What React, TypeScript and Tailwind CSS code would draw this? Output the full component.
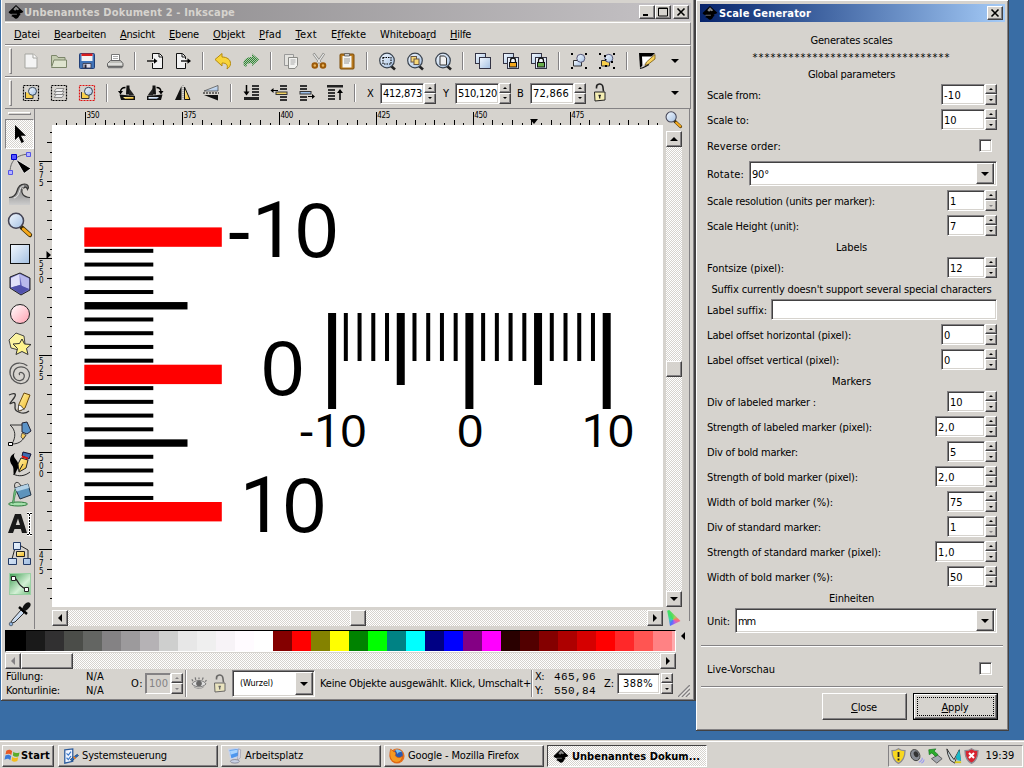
import React, { useLayoutEffect, useRef } from 'react';
import type { ReactNode } from 'react';

const RAISED =
  'border border-t-white border-l-white border-r-[#424142] border-b-[#424142] bg-[#d6d3ce] shadow-[inset_-1px_-1px_0_#848284]';
const SUNKEN =
  'border border-t-[#848284] border-l-[#848284] border-r-white border-b-white bg-white shadow-[inset_1px_1px_0_#424142,inset_-1px_-1px_0_#d6d3ce]';
const DITHER =
  'bg-[conic-gradient(#fff_25%,#d6d3ce_0_50%,#fff_0_75%,#d6d3ce_0)] bg-[length:2px_2px]';

/* A single line of text, tracked so that it takes exactly w pixels. */
function Fit({ w, className = '', children }: { w: number; className?: string; children: ReactNode }) {
  const ref = useRef<HTMLSpanElement>(null);
  useLayoutEffect(() => {
    const el = ref.current;
    if (!el) return;
    el.style.letterSpacing = '0px';
    const n = (el.textContent || '').length;
    el.style.letterSpacing = `${(w - el.getBoundingClientRect().width) / n}px`;
  }, [w]);
  return (
    <span ref={ref} className={`inline-block shrink-0 whitespace-pre ${className}`}>
      {children}
    </span>
  );
}

const U = ({ children }: { children: ReactNode }) => (
  <span className="underline decoration-1 underline-offset-1 [text-decoration-skip-ink:none]">{children}</span>
);

function Tri({ dir, size = 3, color = '#000' }: { dir: 'up' | 'down' | 'left' | 'right'; size?: number; color?: string }) {
  const s = size;
  const d = {
    up: `M0 ${s}L${s} 0L${2 * s} ${s}z`,
    down: `M0 0H${2 * s}L${s} ${s}z`,
    left: `M${s} 0V${2 * s}L0 ${s}z`,
    right: `M0 0L${s} ${s}L0 ${2 * s}z`,
  }[dir];
  const flat = dir === 'up' || dir === 'down';
  return (
    <svg className="shrink-0" width={flat ? 2 * s : s} height={flat ? s : 2 * s}>
      <path d={d} fill={color} />
    </svg>
  );
}

function Spin({ downOff, off }: { downOff?: boolean; off?: boolean }) {
  return (
    <div className="flex h-[21px] w-3 shrink-0 flex-col">
      <div className={`flex h-[10px] items-center justify-center ${RAISED}`}>
        <Tri dir="up" size={2} color={off ? '#848284' : '#000'} />
      </div>
      <div className={`flex h-[11px] items-center justify-center ${RAISED}`}>
        <Tri dir="down" size={2} color={downOff || off ? '#848284' : '#000'} />
      </div>
    </div>
  );
}

/* ---------- icons ---------- */

function Svg({ s = 18, children }: { s?: number; children: ReactNode }) {
  return (
    <svg width={s} height={s} viewBox="0 0 18 18" fill="none" className="shrink-0 overflow-visible">
      {children}
    </svg>
  );
}

function Defs() {
  return (
    <svg width="0" height="0" className="absolute">
      <defs>
        <linearGradient id="blue" x1="0" y1="0" x2="1" y2="1">
          <stop offset="0" stopColor="#f4f9ff" />
          <stop offset="1" stopColor="#a4c0e2" />
        </linearGradient>
        <linearGradient id="pink" x1="0" y1="0" x2="1" y2="1">
          <stop offset="0" stopColor="#fff" />
          <stop offset="1" stopColor="#ffa0b0" />
        </linearGradient>
        <linearGradient id="gold" x1="0" y1="0" x2="1" y2="1">
          <stop offset="0" stopColor="#fff6b0" />
          <stop offset="1" stopColor="#f2b51c" />
        </linearGradient>
        <linearGradient id="grey" x1="0" y1="0" x2="0" y2="1">
          <stop offset="0" stopColor="#777" />
          <stop offset="1" stopColor="#ccc" />
        </linearGradient>
        <linearGradient id="green" x1="0" y1="0" x2="1" y2="1">
          <stop offset="0" stopColor="#3c9b50" />
          <stop offset="0.6" stopColor="#d4f0d6" />
          <stop offset="1" stopColor="#6fbf7c" />
        </linearGradient>
        <pattern id="hatch" width="2" height="2" patternUnits="userSpaceOnUse">
          <rect width="1" height="1" fill="#2f8a35" />
          <rect x="1" y="1" width="1" height="1" fill="#2f8a35" />
        </pattern>
      </defs>
    </svg>
  );
}

const InkLogo = () => (
  <Svg s={16}>
    <path d="M9 1L17 8.5C17.5 10 14 10 13 11C15 12 13.5 13 12.5 13.2C12.5 15 10 17 8.5 16.5C6.5 15.5 6 14.5 4.5 14.2C3 13.5 5.5 12.5 4.8 11.8C3 11 .5 10.5 .7 9z" fill="#000" />
    <path d="M9 2.5L12.5 6L11 7L9.5 6.2L8 7.5L6 6z" fill="#888" />
    <path d="M4 11.5h6" stroke="#777" />
  </Svg>
);

const Lens = ({ children }: { children?: ReactNode }) => (
  <Svg>
    <path d="M13 14l4 3.5" stroke="#222" strokeWidth="2.6" />
    <circle cx="9" cy="8.5" r="7.3" fill="url(#blue)" stroke="#39424e" strokeWidth="1.2" />
    {children}
  </Svg>
);

const LensOrange = ({ s = 18 }: { s?: number }) => (
  <Svg s={s}>
    <path d="M10.5 11L16.5 16.5" stroke="#3a2a00" strokeWidth="3.2" strokeLinecap="round" />
    <path d="M11.800 12.300L16.3 16.3" stroke="#f5a81c" strokeWidth="2.2" strokeLinecap="round" />
    <circle cx="6.5" cy="6.3" r="5.4" fill="url(#blue)" stroke="#445" strokeWidth="1.1" />
  </Svg>
);

const Clone = ({ children }: { children?: ReactNode }) => (
  <Svg>
    <rect x="1.5" y="1.5" width="10" height="10" fill="url(#blue)" stroke="#334" />
    <rect x="5.5" y="5.5" width="11" height="11" fill="url(#blue)" stroke="#334" />
    {children}
  </Svg>
);

const Padlock = ({ color }: { color: string }) => (
  <>
    <rect x="6.5" y="6.5" width="9" height="9" fill="#f4f8ff" />
    <path d="M8.5 10V8.5a2.5 2.5 0 015 0V10" stroke="#111" strokeWidth="1.3" />
    <rect x="7.5" y="10.5" width="7" height="4.5" fill={color} stroke="#111" />
  </>
);

const OpenLock = ({ dim }: { dim?: boolean }) => (
  <Svg>
    <g opacity={dim ? 0.6 : 1} transform="translate(0 -.5)">
      <path d="M5.500 5V4a3.200 3.200 0 016.400-.5L12.500 8" stroke="#222" strokeWidth="1.600" />
      <path d="M3.500 8.500h10.500v8l-10 1z" fill="#f6efb4" stroke="#222" />
      <path d="M8.700 11.500v3.500M7.500 12h2.400" stroke="#222" strokeWidth="1.300" />
    </g>
  </Svg>
);

const SelBox = ({ color = '#000', layers }: { color?: string; layers?: boolean }) => (
  <Svg>
    <rect x="1.5" y="1.5" width="15" height="15" stroke={color} strokeWidth="1.2" strokeDasharray="2 1" />
    {layers ? (
      <g fill="#eee" stroke="#777" strokeWidth=".8">
        <path d="M4 13.500l2.500-3H14l-2 3z" />
        <path d="M4 10.500l2.500-3H14l-2 3z" />
        <path d="M4 7.500l2.500-3H14l-2 3z" />
      </g>
    ) : (
      <>
        <path d="M3.5 8v6.5H11V11" fill="#f8cf4a" stroke="#333" />
        <circle cx="10.5" cy="7.3" r="4" fill="url(#blue)" stroke="#345" />
      </>
    )}
  </Svg>
);

const GroupIcon = ({ un }: { un?: boolean }) => (
  <Svg>
    <path d="M1 1h2v2H1zM15 1h2v2h-2zM1 15h2v2H1zM15 15h2v2h-2z" fill="#000" />
    <path d="M3.5 8.5h8V14h-8z" fill={un ? '#f8cf4a' : 'url(#blue)'} stroke="#333" />
    <circle cx="10.8" cy="6.3" r="4" fill="url(#blue)" stroke="#557" />
    {un && <path d="M7 7h1.500v1.500H7zM13 9h2v2h-2zM7 13h2v2H7zM6 3h2v2H6z" fill="#000" />}
  </Svg>
);

const TOP_ICONS: (ReactNode | null)[] = [
  <Svg><path d="M3 2h8.5L15 5.5V16H3z" fill="#f4f4f4" stroke="#a5a5a0" /><path d="M11 2v4h4" stroke="#a5a5a0" fill="#fff" /></Svg>,
  <Svg><path d="M1.5 14V3.5h5l1.5 2h7V8" fill="#c4ccb0" stroke="#7c866a" /><path d="M1.5 15.5L4 8h12.5v7.5z" fill="#dfe4cf" stroke="#7c866a" /></Svg>,
  <Svg><rect x="1.5" y="1.5" width="15" height="15" rx="1" fill="#4274b8" stroke="#223f77" /><path d="M3.5 2h11v7h-11z" fill="#f4f4f4" /><path d="M3.5 1.5h11V4h-11z" fill="#d81e1e" /><path d="M5 11.5h8V16H5z" fill="#dde" stroke="#334" strokeWidth=".8" /><path d="M6.5 12.5h2V16h-2z" fill="#223" /></Svg>,
  <Svg><path d="M5.5 9V2.5h8V9" fill="#fff" stroke="#777" /><path d="M7 4.500h5M7 6.500h5" stroke="#aaa" /><path d="M1.500 14.500v-3l3-3h10l2.500 3v3z" fill="#bdbdb8" stroke="#666" /><path d="M2 12h14" stroke="#fff" /><path d="M2 15.500h14.500" stroke="#777" strokeWidth="1.500" /></Svg>,
  null,
  <Svg><path d="M6.5 7V1.5h7L16.500 4.500v12h-10V11" fill="#f2f2f2" stroke="#111" /><path d="M13 2v3h3" stroke="#111" /><path d="M1 9h8" stroke="#000" strokeWidth="1.300" /><path d="M8 6.200L11.500 9L8 11.800z" fill="#000" /></Svg>,
  <Svg><path d="M11.500 11v5.500h-9v-15h6l3 3V7" fill="#f2f2f2" stroke="#111" /><path d="M8 2v3h3" stroke="#111" /><path d="M7 9h7" stroke="#000" strokeWidth="1.300" /><path d="M13.500 6.200L17 9l-3.500 2.800z" fill="#000" /></Svg>,
  null,
  <Svg><path d="M1 7.500L8 1.500v3.500c5 0 8.500 2.500 8.500 6.500 0 2.500-1.500 4-3.500 5.500 1.200-4-.5-6-5-6v3z" fill="#f8d43a" stroke="#b58a0c" /></Svg>,
  <Svg><g transform="matrix(-1 0 0 1 18 0)"><path d="M1 7.500L8 1.500v3.500c5 0 8.500 2.500 8.500 6.500 0 2.500-1.500 3-3.500 3.500 1.200-3-.5-4-5-4v3z" fill="#5c9c5c" opacity=".3" /><path d="M1 7.500L8 1.500v3.500c5 0 8.500 2.500 8.500 6.500 0 2.500-1.500 3-3.500 3.500 1.200-3-.5-4-5-4v3z" fill="url(#hatch)" /></g></Svg>,
  null,
  <Svg><path d="M2.500 2.500h9v11h-9z" fill="#e4e3df" stroke="#999" /><path d="M6.500 5.500h9v8l-2.500 3H6.500z" fill="#f2f2f0" stroke="#8a8a86" /><path d="M8.500 8h5M8.500 10h5M8.500 12h4" stroke="#aaa" /></Svg>,
  <Svg><path d="M3.500 1.500L10.500 11M14 1.500L7.500 11" stroke="#8a8a86" strokeWidth="2.600" /><path d="M3.800 2L10.500 11M13.700 2L7.500 11" stroke="#eee" strokeWidth="1.200" /><circle cx="4.800" cy="13.500" r="2.300" stroke="#9c5a0a" strokeWidth="2" fill="#e9b45a" /><circle cx="13" cy="13.500" r="2.300" stroke="#9c5a0a" strokeWidth="2" fill="#e9b45a" /></Svg>,
  <Svg><rect x="2" y="2" width="14" height="15" rx="1" fill="#b97a1e" stroke="#7a4a08" /><rect x="4.500" y="4" width="9" height="11.500" fill="#f5f5f2" /><path d="M6.500 1.500h5V4h-5z" fill="#ccc" stroke="#555" strokeWidth=".8" /><path d="M6 7h6M6 9h6M6 11h5" stroke="#999" /></Svg>,
  null,
  <Lens><rect x="5" y="5.500" width="8" height="6.500" stroke="#000" strokeWidth="1.100" strokeDasharray="1.500 1" /></Lens>,
  <Lens><rect x="5" y="4.500" width="5.500" height="5.500" fill="#f8d878" stroke="#654" /><rect x="8" y="7" width="5" height="5.500" fill="#f8d878" stroke="#654" /></Lens>,
  <Lens><path d="M6 4h4.500L12.500 6v7H6z" fill="#f0f0f0" stroke="#333" /></Lens>,
  null,
  <Clone />,
  <Clone><Padlock color="#f5a81c" /></Clone>,
  <Clone><Padlock color="#68ad4c" /></Clone>,
  null,
  <GroupIcon />,
  <GroupIcon un />,
  null,
  <Svg><path d="M1 1h16L2 16z" fill="#000" /><path d="M4 4.500h10L4.500 14z" fill="#fff" /><path d="M17 2.500v4.500L10.500 12l-3.500 1.500 1.500-3.500z" fill="url(#gold)" stroke="#6a4a00" strokeWidth=".7" /><path d="M2 16.500c4-.5 5-2 9-4" stroke="#111" strokeWidth="1.200" /></Svg>,
];

const Bars = ({ x = 10, ys = [2, 6, 9, 12, 15] }: { x?: number; ys?: number[] }) => (
  <>{ys.map((y) => <rect key={y} x={x} y={y} width="7" height="2" fill="#333" />)}</>
);

const CMD_ICONS: (ReactNode | null)[] = [
  <SelBox />,
  <SelBox layers />,
  <SelBox color="#e01010" />,
  null,
  <Svg><path d="M8.500 1.500h3v9H8z" fill="#111" /><path d="M1.500 10.500L17 12v4H3z" fill="#111" /><path d="M5 13h10.500v1.800H7z" fill="url(#gold)" /><path d="M7.500 3.500C4 3.500 2.500 5 2.500 8" stroke="#000" strokeWidth="1.300" /><path d="M0 7h5L2.500 10.500z" fill="#000" /><path d="M11 4l5.500 7.500H11z" fill="#222" /></Svg>,
  <Svg><path d="M9.500 1.500h-3v9H10z" fill="#111" /><path d="M16.500 10.500L1 12v4h14z" fill="#111" /><path d="M13 13H2.500v1.800H11z" fill="url(#blue)" /><path d="M10.500 3.500C14 3.500 15 5 15 8" stroke="#000" strokeWidth="1.300" /><path d="M12.500 7h5L15 10.500z" fill="#000" /><path d="M7 4l-5.500 7.500H7z" fill="#222" /></Svg>,
  <Svg><path d="M7.500 2v14H1z" fill="#111" /><path d="M10.500 3v12.500h5.500z" fill="url(#gold)" stroke="#111" /><path d="M9 1v16" stroke="#888" strokeDasharray="1 1" /></Svg>,
  <Svg><path d="M16 1.500v5.500H2z" fill="url(#blue)" stroke="#444" strokeWidth=".7" /><path d="M16 16.500V11H2z" fill="#111" /><path d="M1 9h16" stroke="#000" strokeDasharray="2 1" /></Svg>,
  null,
  <Svg><Bars ys={[1, 4, 7, 10]} /><rect x="2" y="13" width="15" height="3" fill="#222" /><path d="M4.500 1v8" stroke="#000" strokeWidth="1.500" /><path d="M1.500 7.500h6L4.500 11.500z" fill="#000" /></Svg>,
  <Svg><Bars ys={[1, 4, 12, 15]} /><rect x="6" y="8" width="11" height="2.500" fill="#f0d060" stroke="#333" /><path d="M1 6.500h7" stroke="#000" /><path d="M3.500 4v5L.5 6.500z" fill="#000" /></Svg>,
  <Svg><Bars x={2} ys={[1, 4, 12, 15]} /><rect x="2" y="7.500" width="11" height="2.500" fill="#9cc0ea" stroke="#333" /><path d="M10 12.500h6" stroke="#000" /><path d="M14 10v5l3-2.500z" fill="#000" /></Svg>,
  <Svg><Bars x={2} ys={[5, 8, 11, 14]} /><rect x="1" y="1" width="16" height="2.500" fill="#222" /><path d="M14 7v9" stroke="#000" strokeWidth="1.500" /><path d="M11 9h6l-3-4z" fill="#000" /></Svg>,
  null,
];

const TOOLS: ReactNode[] = [
  <svg width="26" height="26"><path d="M8 4v15l3.500-3.500 3 6.500 2.500-1.200-3-6H19z" fill="#000" /></svg>,
  <svg width="26" height="26" fill="none"><path d="M3 22C3 12 7 4 22 3" stroke="#666" /><path d="M8.500 8L17 22.500l7-5z" fill="#000" stroke="#fff" strokeWidth=".8" /><path d="M4.500 3.500h5v5h-5z" fill="#5454ff" stroke="#0000c8" /><path d="M19.500 1.500h4v4h-4zM1.500 19.500h4v4h-4z" fill="#b4b4ff" stroke="#5454e8" /></svg>,
  <svg width="26" height="26" fill="none"><path d="M2 24V16.500C7 16.500 9 14 10 10c1-4 4-7 7.500-7S22 6 20.500 8C20 5.500 16 5 15 8c-1 4 1 8 8 8.500V24z" fill="url(#grey)" /><path d="M2 16.500C7 16.500 9 14 10 10c1-4 4-7 7.500-7S22.500 6 20.500 8.500C20 6 17.500 5 16.500 7.500M15 8c-1 4 1 8 8 8.500" stroke="#333" strokeWidth="1.200" /><path d="M7 17c4-1 5-5 6-8.500C13.500 6 15 5 17 5" stroke="#eee" /></svg>,
  <LensOrange s={25} />,
  <svg width="26" height="26"><rect x="3.500" y="3.500" width="19" height="19" fill="url(#blue)" stroke="#111" /></svg>,
  <svg width="26" height="26"><path d="M13 2l10 5v12l-9 5-11-7V6z" fill="#6c6cc0" stroke="#222" /><path d="M12.500 3l9.500 4.500V18l-7-2.500z" fill="#b8b8ec" /><path d="M12.500 3L4 7v9.500l9-2.500z" fill="#e0e0fa" /><path d="M4 16.500l9-2.500 9 4-8 5z" fill="#5050ac" /></svg>,
  <svg width="26" height="26"><circle cx="13" cy="13" r="9.500" fill="url(#pink)" stroke="#222" /></svg>,
  <svg width="26" height="26"><path d="M9 2l8 3 1 8-6 6-8-2L2 9z" fill="#fbf3a0" stroke="#444" /><path d="M15 8l2.500 5 6.500.5-4.500 4 1.500 6-6-3-6 3 1.500-6-4.500-4.500 6.500-.5z" fill="#fff48c" stroke="#333" /></svg>,
  <svg width="26" height="26" fill="none"><path d="M13 14c-2-1 0-4 3-2s2 7-2 8-9-2-8-8 7-8 12-6 7 8 4 13-10 6-15 2S.5 10 4 5 16 0 21 4" stroke="#555" strokeWidth="1.300" transform="translate(1 1) scale(.92)" /></svg>,
  <svg width="26" height="26" fill="none"><path d="M2 4c6-3 8-1 5 3s-6 7-2 5 3 2 3 5 8 8 14 3" stroke="#333" strokeWidth="1.300" /><path d="M12 13L17 2l6 2-5 13-5 3-2-1z" fill="url(#gold)" stroke="#6a4a10" /><path d="M11.500 20v-6l3 1 1 2 2 1z" fill="#fff" stroke="#333" strokeWidth=".7" /></svg>,
  <svg width="26" height="26" fill="none"><path d="M3 4h15M3 4c6 5 6 12 2 19M5 23c8 0 11-4 14-9" stroke="#333" /><path d="M15 2l5-1 4 9-4 3-5-2z" fill="#5b93c8" stroke="#223" /><path d="M15 12l4 2-3 4-2-2z" fill="#f8d060" stroke="#333" strokeWidth=".7" /><path d="M1.500 21.500h4v3h-4z" fill="#fff" stroke="#000" /></svg>,
  <svg width="26" height="26" fill="none"><path d="M8 2C2 5 2 10 5 14s0 8 3 10c1-5 5-7 3-12S5 6 8 2z" fill="#000" /><path d="M6 23c6 3 12 2 17-2" stroke="#222" /><path d="M14 7l7 2-2 8-7 4-1-8z" fill="url(#gold)" stroke="#222" /><path d="M16 1l8 2-2 5-7-3z" fill="#3b6cb0" stroke="#113" /><path d="M15 5.500l6 2" stroke="#d11" strokeWidth="2" /><path d="M12 20l4-7" stroke="#222" /></svg>,
  <svg width="26" height="26" fill="none"><ellipse cx="11" cy="23" rx="9.500" ry="2" fill="#a4e0ac" stroke="#2e7a3c" /><path d="M5 22c2-4 1-10 3-14h2c-1 5-3 8-3 14z" fill="#7cc88a" stroke="#2e7a3c" strokeWidth=".7" /><path d="M8 7l13-4 3 11-11 4z" fill="#5e94bc" stroke="#234" /><path d="M8 7l13-4 1 4L9.500 10.500z" fill="#b4d2e6" /><path d="M8 7C6 1 11-1 14 5" stroke="#333" /></svg>,
  <svg width="26" height="26" fill="none"><path d="M1 22L8 3h6l6 19h-5l-1.200-4H7.500L6 22zM8.800 14H13l-2-6.500z" fill="#1a1a1a" /><path d="M20 2.500h5M20 23.500h5M22.500 3v20" stroke="#fff" strokeWidth="3" /><path d="M20 2.500h5M20 23.500h5M22.500 3v20" stroke="#000" strokeDasharray="2 1" /></svg>,
  <svg width="26" height="26" fill="none"><path d="M8 7L5 18M14 5l7 4v9M12 10v3" stroke="#222" /><path d="M6.500 1.500h7v7h-7zM1.500 17.500h8v6h-8zM16.500 17.500h7v6h-7z" fill="url(#blue)" stroke="#223a66" /><path d="M9.500 10.500h8v5h-8z" fill="url(#gold)" stroke="#222" /></svg>,
  <svg width="26" height="26" fill="none"><rect x="2.500" y="2.500" width="21" height="21" fill="url(#green)" stroke="#9ad0a4" /><path d="M7 7c5 1 2 7 12 11" stroke="#222" strokeWidth="1.300" /><path d="M4.500 5.500h4v4h-4zM17.500 16.500h4v4h-4z" fill="#fff" stroke="#222" /></svg>,
  <svg width="26" height="26" fill="none"><path d="M14 9l3 3-9 9-3 1-1-1 2-3z" fill="url(#blue)" stroke="#333" /><path d="M12 6l8 7" stroke="#000" strokeWidth="2.500" /><path d="M15 8c2-6 6-8 8-6s-1 6-5 8z" fill="#111" /><circle cx="4" cy="23" r="1.800" fill="#8fb2dc" stroke="#345" strokeWidth=".7" /></svg>,
];

/* ---------- main window ---------- */

const MENUS: [ReactNode, number][] = [
  [<><U>D</U>atei</>, 26],
  [<><U>B</U>earbeiten</>, 52],
  [<><U>A</U>nsicht</>, 35],
  [<><U>E</U>bene</>, 30],
  [<><U>O</U>bjekt</>, 32],
  [<><U>P</U>fad</>, 22.5],
  [<><U>T</U>ext</>, 21.500],
  [<>E<U>f</U>fekte</>, 35],
  [<>Whiteboa<U>r</U>d</>, 56],
  [<><U>H</U>ilfe</>, 21],
];

function Field({ w, value, tw }: { w: number; value: string; tw: number }) {
  return (
    <div className="flex items-center">
      <div className={`flex h-[21px] items-center overflow-hidden pl-[2px] ${SUNKEN}`} style={{ width: w }}>
        <Fit w={tw}>{value}</Fit>
      </div>
      <Spin />
    </div>
  );
}

function IconRow({ icons }: { icons: (ReactNode | null)[] }) {
  return (
    <>
      {icons.map((icon, i) =>
        icon ? (
          <div key={i} className="flex w-7 shrink-0 justify-center">{icon}</div>
        ) : (
          <div key={i} className="flex w-3 shrink-0 justify-center">
            <div className="h-[18px] w-[2px] border-l border-l-[#848284] bg-white" />
          </div>
        ),
      )}
    </>
  );
}

const Handle = () => <div className="mr-[5px] ml-[4px] h-[26px] w-[3px] shrink-0 border border-t-white border-l-white border-r-[#848284] border-b-[#848284]" />;

const BAR = 'flex shrink-0 items-center border-t border-t-white border-b border-b-[#848284]';

function HRuler() {
  const ticks = Array.from({ length: 64 }, (_, i) => i - 4);
  return (
    <svg width="627" height="16" className="block shrink-0">
      {ticks.map((i) => {
        const x = Math.round(85.3 + i * 9.695) - 36;
        const h = i % 10 === 0 ? 13 : i % 2 === 0 ? 5 : 2;
        return x > 16 && x < 627 ? <rect key={i} x={x} y={16 - h} width="1" height={h} fill="#000" /> : null;
      })}
      {[350, 375, 400, 425, 450, 475].map((n, i) => (
        <text key={n} x={50.500 + i * 96.95} y="8.500" textLength="13" className="[font-family:'DejaVu_Sans_Condensed','DejaVu_Sans',sans-serif] text-[8px]">{n}</text>
      ))}
      <path d="M494 10h8l-4 5z" fill="#000" />
    </svg>
  );
}

function VRuler() {
  const ticks = Array.from({ length: 54 }, (_, i) => i - 4);
  return (
    <svg width="16" height="482" className="block shrink-0">
      {ticks.map((i) => {
        const y = Math.round(161.3 + i * 9.7) - 125;
        const w = i % 10 === 0 ? 13 : i % 2 === 0 ? 5 : 2;
        return y > 0 ? <rect key={i} x={16 - w} y={y} width={w} height="1" fill="#000" /> : null;
      })}
      {['575', '550', '525', '500', '475'].map((n, i) =>
        n.split('').map((c, j) => (
          <text key={n + j} x="3" y={45 + i * 97 + j * 8} className="[font-family:'DejaVu_Sans_Condensed','DejaVu_Sans',sans-serif] text-[8px]">{c}</text>
        )),
      )}
      <path d="M10.500 126v8l4.500-4z" fill="#000" />
    </svg>
  );
}

const One = () => <tspan className="[font-family:Roboto,sans-serif]">1</tspan>;

function Drawing() {
  const step = 13.73;
  const idx = Array.from({ length: 21 }, (_, i) => i);
  return (
    <svg width="611" height="482" viewBox="52 125 611 482" className="block shrink-0 bg-white [font-family:'Liberation_Sans',Arial,sans-serif]">
      {idx.map((i) => {
        const c = 237.100 + i * step;
        if (i % 10 === 0) return <rect key={i} x="84.300" y={c - 9.700} width="137.500" height="19.400" fill="#f00" />;
        if (i % 5 === 0) return <rect key={i} x="84.500" y={c - 3.700} width="103" height="7.400" />;
        return <rect key={i} x="84.500" y={c - 2} width="68.800" height="4" />;
      })}
      {idx.map((i) => {
        const c = 332.100 + i * step;
        const b = i % 5 === 0;
        const h = i % 10 === 0 ? 96 : b ? 72 : 48;
        return <rect key={i} x={c - (b ? 4 : 2)} y="313" width={b ? 8 : 4} height={h} />;
      })}
      <g fontSize="77">
        <text x="226.300" y="257">-<One />0</text>
        <text x="261.300" y="394.500">0</text>
        <text x="239.700" y="531.700"><One />0</text>
      </g>
      <g fontSize="46.500">
        <text x="298.800" y="447">-<One />0</text>
        <text x="457.300" y="447">0</text>
        <text x="581.800" y="447"><One />0</text>
      </g>
    </svg>
  );
}

const SWATCHES = [
  'bg-[#000]', 'bg-[#1a1a1a]', 'bg-[#313031]', 'bg-[#4b4d49]', 'bg-[#636562]', 'bg-[#848284]', 'bg-[#9c9a9c]',
  'bg-[#b5b2b5]', 'bg-[#cecfce]', 'bg-[#e7e7e7]', 'bg-[#efefef]', 'bg-[#f7f3f7]', 'bg-[#fffbff]', 'bg-[#fff]',
  'bg-[#840000]', 'bg-[#f00]', 'bg-[#848200]', 'bg-[#ff0]', 'bg-[#008200]', 'bg-[#0f0]', 'bg-[#008284]',
  'bg-[#0ff]', 'bg-[#000084]', 'bg-[#00f]', 'bg-[#840084]', 'bg-[#f0f]', 'bg-[#290000]', 'bg-[#520000]',
  'bg-[#840000]', 'bg-[#ad0000]', 'bg-[#d60000]', 'bg-[#f00]', 'bg-[#ff2829]', 'bg-[#ff5552]', 'bg-[#ff8284]',
];

const SQ = `flex h-4 w-4 shrink-0 items-center justify-center ${RAISED}`;

function Body() {
  return (
    <div className="flex h-[520px] shrink-0">
      <div className="flex w-[30px] shrink-0 flex-col items-center border-r border-r-[#848284] pt-[3px]">
        <div className="mb-[4px] h-[3px] w-[23px] shrink-0 border border-t-white border-l-white border-r-[#848284] border-b-[#848284]" />
        {TOOLS.map((t, i) => (
          <div key={i} className={`flex h-[30px] w-[29px] shrink-0 items-center justify-center ${i === 0 ? `border border-t-[#848284] border-l-[#848284] border-r-white border-b-white ${DITHER}` : ''}`}>
            {t}
          </div>
        ))}
      </div>
      <div className="ml-px flex w-[627px] flex-col">
        <HRuler />
        <div className="flex">
          <VRuler />
          <Drawing />
        </div>
        <div className={`mt-[3px] ml-4 flex h-4 w-[611px] ${DITHER}`}>
          <div className={SQ}><Tri dir="left" size={4} /></div>
          <div className={`ml-[282px] ${SQ}`} />
          <div className={`ml-auto ${SQ}`}><Tri dir="right" size={4} /></div>
        </div>
      </div>
      <div className="ml-[2px] flex w-[18px] flex-col items-center pt-[2px]">
        <LensOrange s={17} />
        <div className={`mt-[3px] flex h-[476px] w-4 shrink-0 flex-col ${DITHER}`}>
          <div className={SQ}><Tri dir="up" size={4} /></div>
          <div className={`mt-[214px] ${SQ}`} />
          <div className={`mt-auto ${SQ}`}><Tri dir="down" size={4} /></div>
        </div>
        <div className="mt-[3px] h-[16px] w-[14px] shrink-0 bg-[conic-gradient(from_90deg_at_45%_60%,#ff7070,#c060e0,#5070ff,#40d0b0,#40e060,#a0d060,#ff7070)] [clip-path:polygon(5%_5%,20%_0,100%_68%,25%_100%)]" />
      </div>
      <div className="ml-[7px] h-[512px] w-[2px] border-l border-l-[#848284]" />
    </div>
  );
}

function StatusBar() {
  return (
    <div className="flex h-[29px] shrink-0 items-center">
      <div className="flex w-[80px] shrink-0 flex-col pl-[1px] leading-[14px]">
        <Fit w={37} className="self-start">Füllung:</Fit>
        <Fit w={54} className="self-start">Konturlinie:</Fit>
      </div>
      <div className="flex w-[46px] shrink-0 flex-col pl-[1px] leading-[14px]">
        <Fit w={18} className="self-start">N/A</Fit>
        <Fit w={18} className="self-start">N/A</Fit>
      </div>
      <Fit w={12}>O:</Fit>
      <div className="ml-[2px] flex h-[21px] w-[26px] shrink-0 items-center border border-t-[#848284] border-l-[#848284] border-r-white border-b-white pl-[3px] text-[#848284] shadow-[inset_1px_1px_0_#848284]">
        <Fit w={19}>100</Fit>
      </div>
      <Spin off />
      <div className="ml-[2px] h-[27px] w-[2px] border-l border-l-[#848284] bg-white" />
      <div className="ml-[4px] flex w-[16px] shrink-0">
        <svg width="17" height="16" viewBox="0 0 17 16" fill="none"><path d="M1 8c3-5 12-5 15 0-4 4-11 4-15 0z" fill="#ddd" stroke="#777" /><circle cx="8.500" cy="7.500" r="3" fill="#666" /><path d="M2 5L1 3M5 3.500L4.500 1M8.500 3V1M12 3.500l1-2.500M15 5.500L16.500 4" stroke="#777" strokeWidth="1.300" /><path d="M3 11c4 2.500 8 2.500 11-.5" stroke="#999" /></svg>
      </div>
      <div className="ml-[4px] flex w-[18px] shrink-0"><OpenLock dim /></div>
      <div className={`ml-[3px] flex h-[27px] w-[83px] shrink-0 items-center p-px pl-[7px] ${SUNKEN}`}>
        <Fit w={33} className="text-[9px]">(Wurzel)</Fit>
        <div className={`ml-auto flex h-[23px] w-[18px] items-center justify-center ${RAISED}`}><Tri dir="down" size={4} /></div>
      </div>
      <Fit w={211} className="ml-[5px]">Keine Objekte ausgewählt. Klick, Umschalt+</Fit>
      <div className="h-[27px] w-[2px] shrink-0 border-l border-l-[#848284] bg-white" />
      <div className="flex w-[21px] shrink-0 flex-col pl-[2px] leading-[14px]">
        <Fit w={9} className="self-start">X:</Fit>
        <Fit w={9} className="self-start">Y:</Fit>
      </div>
      <div className="flex w-[50px] shrink-0 flex-col leading-[14px] [font-family:'Liberation_Mono',monospace]">
        <Fit w={42} className="self-start">465,96</Fit>
        <Fit w={42} className="self-start">550,84</Fit>
      </div>
      <Fit w={10}>Z:</Fit>
      <div className={`ml-[3px] flex h-[21px] w-[43px] shrink-0 items-center pl-[5px] ${SUNKEN}`}><Fit w={30}>388%</Fit></div>
      <div className="ml-px flex"><Spin /></div>
      <svg width="12" height="12" className="mt-[14px] ml-[5px] shrink-0"><path d="M0 12L12 0M4 12L12 4M8 12l4-4" stroke="#848284" strokeWidth="1.500" /><path d="M1.500 12L12 1.500M5.500 12L12 5.500M9.500 12L12 9.500" stroke="#fff" strokeWidth=".7" /></svg>
    </div>
  );
}

const Glyph = ({ children }: { children: ReactNode }) => (
  <svg width="10" height="10" fill="none" stroke="#000" strokeWidth="1.600">{children}</svg>
);

function MainWindow() {
  return (
    <div className="flex h-[701px] w-[695px] shrink-0 flex-col border-r-2 border-b border-r-[#424142] border-b-[#424142] bg-[#d6d3ce] pt-[3px] pr-[3px] pl-[4px] shadow-[inset_1px_0_0_#fff,inset_-1px_-1px_0_#848284]">
      <div className="flex h-[18px] w-[686px] shrink-0 items-center bg-linear-to-r from-[#848284] to-[#c6c3c6] pl-[3px]">
        <InkLogo />
        <Fit w={211} className="mr-auto font-bold text-[#d6d3ce]">Unbenanntes Dokument 2 - Inkscape</Fit>
        <div className={`flex h-[14px] w-4 items-center justify-center ${RAISED}`}><Glyph><path d="M1 8h5" stroke="#000" strokeWidth="2" /></Glyph></div>
        <div className={`flex h-[14px] w-4 items-center justify-center ${RAISED}`}><Glyph><path d="M.5 1h9v8h-9zM.5 1.500h9" strokeWidth="1" /></Glyph></div>
        <div className={`mr-[2px] ml-[2px] flex h-[14px] w-4 items-center justify-center ${RAISED}`}><Glyph><path d="M1.500 1.500l7 7M8.500 1.500l-7 7" /></Glyph></div>
      </div>
      <div className="mt-px flex h-[23px] w-[686px] shrink-0 items-center gap-[14px] border-r border-b border-t border-t-white border-r-[#848284] border-b-[#848284] pt-px pl-[9px]">
        {MENUS.map(([m, w], i) => <Fit key={i} w={w}>{m}</Fit>)}
      </div>
      <div className={`h-[32px] w-[686px] border-r border-r-[#848284] ${BAR}`}>
        <Handle />
        <IconRow icons={TOP_ICONS} />
        <div className="ml-auto flex pr-[11px]"><Tri dir="down" size={4} /></div>
      </div>
      <div className={`h-[32px] w-[686px] border-r border-r-[#848284] ${BAR}`}>
        <Handle />
        <IconRow icons={CMD_ICONS} />
        <Fit w={8} className="ml-[6px]">X</Fit>
        <div className="ml-[5px]"><Field w={44} tw={39} value="412,873" /></div>
        <Fit w={8} className="ml-[7px]">Y</Fit>
        <div className="ml-[4px]"><Field w={44} tw={39} value="510,120" /></div>
        <Fit w={8} className="ml-[6px]">B</Fit>
        <div className="ml-[5px]"><Field w={44} tw={36} value="72,866" /></div>
        <div className="ml-[5px] flex"><OpenLock /></div>
        <div className="ml-auto flex pr-[11px]"><Tri dir="down" size={4} /></div>
      </div>
      <Body />
      <div className="mt-px flex h-[22px] shrink-0">
        <div className="flex h-[22px] w-[671px] overflow-hidden border border-t-black border-l-black border-r-white border-b-white bg-[#ffaaad]">
          {SWATCHES.map((c, i) => <div key={i} className={`h-full shrink-0 ${i ? 'w-[19px]' : 'w-5'} ${c}`} />)}
        </div>
        <div className="mt-[2px] ml-[5px]"><Tri dir="left" size={4} /></div>
      </div>
      <div className={`mt-px flex h-4 w-[671px] shrink-0 ${DITHER}`}>
        <div className={SQ}><Tri dir="left" size={4} color="#848284" /></div>
        <div className={`h-4 w-[52px] ${RAISED}`} />
        <div className={`ml-auto ${SQ}`}><Tri dir="right" size={4} /></div>
      </div>
      <StatusBar />
    </div>
  );
}

/* ---------- dialog ---------- */

type Row =
  | { k: 'head'; t: string; w: number }
  | { k: 'num'; t: string; w: number; v: string; fw: number; off?: boolean }
  | { k: 'check'; t: string; w: number }
  | { k: 'combo'; t: string; w: number; v: string; vw: number }
  | { k: 'text'; t: string; w: number };

const ROWS: Row[] = [
  { k: 'head', t: 'Generates scales', w: 82 },
  { k: 'head', t: '*********************************', w: 198 },
  { k: 'head', t: 'Global parameters', w: 87 },
  { k: 'num', t: 'Scale from:', w: 54, v: '-10', fw: 44 },
  { k: 'num', t: 'Scale to:', w: 42, v: '10', fw: 44 },
  { k: 'check', t: 'Reverse order:', w: 74 },
  { k: 'combo', t: 'Rotate:', w: 37, v: '90°', vw: 17 },
  { k: 'num', t: 'Scale resolution (units per marker):', w: 168, v: '1', fw: 38, off: true },
  { k: 'num', t: 'Scale Height (unit):', w: 92, v: '7', fw: 38 },
  { k: 'head', t: 'Labels', w: 31 },
  { k: 'num', t: 'Fontsize (pixel):', w: 77, v: '12', fw: 38 },
  { k: 'head', t: "Suffix currently doesn't support several special characters", w: 280 },
  { k: 'text', t: 'Label suffix:', w: 60 },
  { k: 'num', t: 'Label offset horizontal (pixel):', w: 144, v: '0', fw: 44 },
  { k: 'num', t: 'Label offset vertical (pixel):', w: 132, v: '0', fw: 44 },
  { k: 'head', t: 'Markers', w: 39 },
  { k: 'num', t: 'Div of labeled marker :', w: 109, v: '10', fw: 38 },
  { k: 'num', t: 'Strength of labeled marker (pixel):', w: 165, v: '2,0', fw: 50 },
  { k: 'num', t: 'Div of bold marker:', w: 91, v: '5', fw: 38 },
  { k: 'num', t: 'Strength of bold marker (pixel):', w: 151, v: '2,0', fw: 50 },
  { k: 'num', t: 'Width of bold marker (%):', w: 126, v: '75', fw: 38 },
  { k: 'num', t: 'Div of standard marker:', w: 114, v: '1', fw: 38, off: true },
  { k: 'num', t: 'Strength of standard marker (pixel):', w: 174, v: '1,0', fw: 50 },
  { k: 'num', t: 'Width of bold marker (%):', w: 126, v: '50', fw: 38 },
  { k: 'head', t: 'Einheiten', w: 45 },
  { k: 'combo', t: 'Unit:', w: 23, v: 'mm', vw: 17 },
];

const Check = () => (
  <div className={`mr-[5px] ml-auto h-[13px] w-[13px] ${SUNKEN}`} />
);

function FormRow({ r }: { r: Row }) {
  if (r.k === 'head')
    return <div className="flex h-[13px] shrink-0 items-center justify-center pr-px"><Fit w={r.w} className="pt-[2px]">{r.t}</Fit></div>;
  if (r.k === 'num')
    return (
      <div className="flex h-[21px] shrink-0 items-center">
        <Fit w={r.w} className="mr-auto pt-[2px]">{r.t}</Fit>
        <div className={`flex h-[21px] items-center pl-[2px] ${SUNKEN}`} style={{ width: r.fw }}>
          <Fit w={r.v.length === 3 ? 17 : r.v.length * 6.3} className="pt-[2px]">{r.v}</Fit>
        </div>
        <Spin downOff={r.off} />
      </div>
    );
  if (r.k === 'check')
    return <div className="flex h-[23px] shrink-0 items-center"><Fit w={r.w} className="pt-[2px]">{r.t}</Fit><Check /></div>;
  if (r.k === 'text')
    return <div className="flex h-[21px] shrink-0 items-center gap-[4px]"><Fit w={r.w} className="pt-[2px]">{r.t}</Fit><div className={`h-[21px] grow ${SUNKEN}`} /></div>;
  return (
    <div className="flex h-[25px] shrink-0 items-center gap-[5px]">
      <Fit w={r.w} className="pt-[2px]">{r.t}</Fit>
      <div className={`flex h-[25px] grow items-center p-px pl-[2px] ${SUNKEN}`}>
        <Fit w={r.vw} className="mr-auto pt-[2px]">{r.v}</Fit>
        <div className={`mr-px flex h-[21px] w-[18px] items-center justify-center ${RAISED}`}><Tri dir="down" size={4} /></div>
      </div>
    </div>
  );
}

const Rule = ({ className }: { className: string }) => (
  <div className={`mx-[5px] h-[2px] shrink-0 border-t border-t-[#848284] bg-white ${className}`} />
);

function Dialog() {
  return (
    <div className="ml-px flex h-[731px] w-[313px] shrink-0 flex-col border-r border-b border-r-[#424142] border-b-[#424142] bg-[#d6d3ce] pt-[4px] shadow-[inset_1px_1px_0_#fff,inset_-1px_-1px_0_#848284]">
      <div className="mr-[3px] ml-[4px] flex h-[18px] shrink-0 items-center bg-linear-to-r from-[#08246b] to-[#a5cbf7] pl-[2px]">
        <InkLogo />
        <Fit w={92} className="mr-auto ml-px font-bold text-white">Scale Generator</Fit>
        <div className={`mr-[2px] flex h-[14px] w-4 items-center justify-center ${RAISED}`}><Glyph><path d="M1.500 1.500l7 7M8.500 1.500l-7 7" /></Glyph></div>
      </div>
      <div className="mt-[11px] mr-[11px] ml-[11px] flex shrink-0 flex-col gap-[4px]">
        {ROWS.map((r, i) => <FormRow key={i} r={r} />)}
      </div>
      <Rule className="mt-[12px]" />
      <div className="mx-[11px] mt-[10px] flex h-[23px] shrink-0 items-center"><Fit w={68} className="pt-px">Live-Vorschau</Fit><Check /></div>
      <Rule className="mt-[6px]" />
      <div className="mt-[5px] mr-[10px] flex justify-end gap-[6px]">
        <div className={`flex h-[27px] w-[85px] items-center justify-center pr-px ${RAISED}`}><Fit w={26} className="pt-[2px]"><U>C</U>lose</Fit></div>
        <div className="h-[27px] w-[85px] border border-black">
          <div className={`h-full p-[2px] ${RAISED}`}>
            <div className="flex h-full items-center justify-center border border-dotted border-black pr-px"><Fit w={27} className="pt-[2px]"><U>A</U>pply</Fit></div>
          </div>
        </div>
      </div>
    </div>
  );
}

/* ---------- taskbar ---------- */

const Shield = ({ fill, mark }: { fill: string; mark: ReactNode }) => (
  <svg width="15" height="16" viewBox="0 0 15 16" fill="none"><path d="M7.500.7C9.500 2.200 11.500 2.700 14 2.700c0 6-1.500 10-6.500 12.600C2.500 12.700 1 8.700 1 2.700c2.500 0 4.500-.5 6.500-2z" fill={fill} stroke="#8c8c94" strokeWidth="1.300" />{mark}</svg>
);

function Taskbar() {
  const tasks: [string, number, ReactNode][] = [
    ['Systemsteuerung', 85, <Svg s={16}><path d="M2 2l9-1v14l-9 2z" fill="#eef4ff" stroke="#2a5a9c" strokeWidth="1.400" /><path d="M4 6l2 2 3-4M4 11l2 2 3-4" stroke="#3a78c8" strokeWidth="1.300" /><path d="M8 13l8-6 1.500 1.500-7.500 6z" fill="#2a6ac8" stroke="#134" strokeWidth=".6" /><path d="M12 10l2 2" stroke="#f08020" strokeWidth="2" /></Svg>],
    ['Arbeitsplatz', 58, <Svg s={16}><path d="M3 1.500l11-1 .5 9-9 3z" fill="#4d96ee" stroke="#c8d4ec" strokeWidth="1.500" /><path d="M4.500 3l8.500-1v3L5 7.500z" fill="#a8d4ff" /><path d="M14 1l2.500 1-.5 9-3 2.500z" fill="#dde" stroke="#889" strokeWidth=".6" /><ellipse cx="10" cy="15" rx="5" ry="2" fill="#c8d0e4" stroke="#889" /></Svg>],
    ['Google - Mozilla Firefox', 111, <Svg s={16}><circle cx="9" cy="9" r="8.500" fill="#e8701a" /><circle cx="10" cy="7.500" r="5.500" fill="#2a5ab0" /><path d="M7 2c3-1 6 0 8 3-3-1-5 0-5 2z" fill="#7ac0f0" /><path d="M1 5l1-4 3 3C8 4 8 7 7 8c1 3 5 4 8 1 0 5-4 8-8 7S.500 11 1 5z" fill="#f59a22" stroke="#c8480c" strokeWidth=".6" /></Svg>],
  ];
  return (
    <div className="mt-auto flex h-[28px] shrink-0 items-center border-t border-t-[#d6d3ce] bg-[#d6d3ce] pt-[2px] pl-[2px] shadow-[inset_0_1px_0_#fff]">
      <div className={`flex h-[22px] w-[52px] shrink-0 items-center pl-[2px] ${RAISED}`}>
        <Svg s={15}><g transform="rotate(6 9 9)"><path d="M1 4c3-2 5-2 7 0l-.5 4.500c-2-1.500-4-1.500-7 0z" fill="#e85a24" /><path d="M9.500 4.500c2 1.500 4.500 1.500 7.500 0l-.5 4.500c-3 1.500-5 1.500-7 0z" fill="#5cac2c" /><path d="M.5 10c3-2 5-1.500 7 0L7 15c-2-2-4-2-7 0z" fill="#3a7ad8" /><path d="M9 10.500c2 1.500 4 1.500 7 0L15.500 15c-3 1.500-5 1.500-7 0z" fill="#f4bc1c" /></g></Svg>
        <Fit w={29} className="ml-px font-bold">Start</Fit>
      </div>
      <div className="ml-[4px] flex gap-[3px]">
        {tasks.map(([t, w, icon]) => (
          <div key={t} className={`flex h-[22px] w-[160px] items-center gap-[3px] pl-[4px] ${RAISED}`}>
            {icon}
            <Fit w={w}>{t}</Fit>
          </div>
        ))}
        <div className={`flex h-[22px] w-[160px] items-center gap-[3px] border border-t-[#424142] border-l-[#424142] border-r-white border-b-white pt-px pl-[5px] ${DITHER}`}>
          <InkLogo />
          <Fit w={128} className="font-bold">Unbenanntes Dokum...</Fit>
        </div>
      </div>
      <div className="mr-px ml-auto flex h-[22px] w-[135px] items-center gap-[2.500px] border border-t-[#848284] border-l-[#848284] border-r-white border-b-white pl-[2px]">
        <Shield fill="#f8d820" mark={<path d="M7.500 4v5M7.500 10.500v2" stroke="#222" strokeWidth="1.800" />} />
        <Svg s={16}><ellipse cx="7" cy="8" rx="5" ry="6.500" fill="#888c94" stroke="#444" transform="rotate(-25 7 8)" /><ellipse cx="8" cy="7" rx="2.500" ry="3.500" fill="#333" transform="rotate(-25 8 7)" /><path d="M11 16c3-1 4-3 4-5M14 17c2-1 3-3 3-4" stroke="#9c9cf0" strokeWidth="1.300" /></Svg>
        <Svg s={16}><path d="M5 12l7-4 5 4-6 5z" fill="#a4a8b0" stroke="#555" /><path d="M2 2l8-1-2 2.500 4.500 4-3 2-4-4-3 2z" fill="#2cac2c" stroke="#0c6c1c" strokeWidth=".7" /></Svg>
        <Svg s={16}><path d="M1 1l5 8 3 4 6-11 1 12-4-4-2 7-5-3-3-7z" fill="#c8d4d8" stroke="#222" /><path d="M15 2l-4 8 2 4 4 0z" fill="#18b8c8" /><path d="M10 15h7v2h-7z" fill="#d8c818" /></Svg>
        <Shield fill="#d82430" mark={<path d="M5 5l5 5M10 5l-5 5" stroke="#fff" strokeWidth="2" />} />
        <Fit w={29} className="ml-[4px]">19:39</Fit>
      </div>
    </div>
  );
}

export default function App() {
  return (
    <div className="flex h-[768px] w-[1024px] flex-col overflow-hidden bg-[#396da5] text-[11px] leading-[13px] text-black [font-family:'DejaVu_Sans_Condensed','DejaVu_Sans',sans-serif]">
      <Defs />
      <div className="flex items-start pl-px">
        <MainWindow />
        <div className="-ml-px flex"><Dialog /></div>
      </div>
      <Taskbar />
    </div>
  );
}
